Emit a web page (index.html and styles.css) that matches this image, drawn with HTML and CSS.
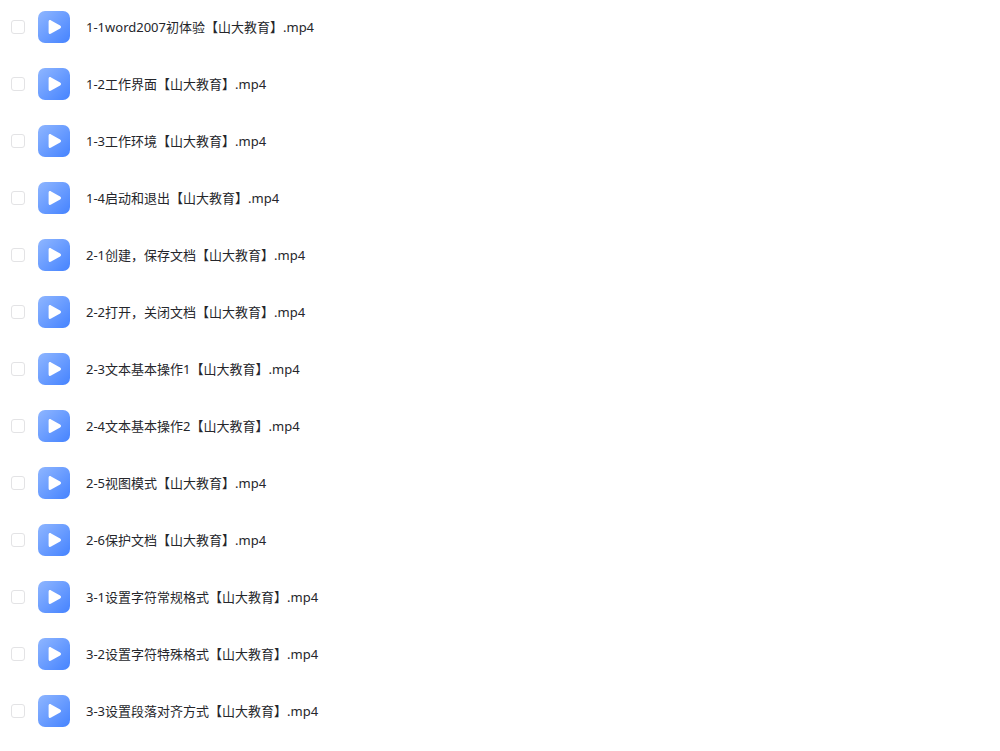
FILE: index.html
```html
<!DOCTYPE html>
<html lang="zh-CN">
<head>
    <meta charset="UTF-8">
    <meta name="viewport" content="width=device-width, initial-scale=1.0">
    <title>文件列表</title>
    <link rel="stylesheet" href="styles.css">
</head>
<body>

<!-- shared video file icon -->
<svg class="icon-defs" width="0" height="0" aria-hidden="true">
    <defs>
        <linearGradient id="videoBg" x1="0" y1="0" x2="1" y2="1">
            <stop offset="0" stop-color="#8fb6ff"/>
            <stop offset="1" stop-color="#4583ff"/>
        </linearGradient>
    </defs>
    <symbol id="video" viewBox="0 0 32 32">
        <rect width="32" height="32" rx="7" fill="url(#videoBg)"/>
        <path d="M10.6 10.8c0-1.6 1.2-2.2 2.5-1.4l9 5.2c1.3.8 1.3 2 0 2.8l-9 5.2c-1.3.8-2.5.2-2.5-1.4z" fill="#fff"/>
    </symbol>
</svg>

<ul class="file-list">
    <li class="file-row">
        <input type="checkbox" id="file1">
        <svg class="file-icon" aria-hidden="true"><use href="#video"/></svg>
        <label for="file1">1-1word2007初体验【山大教育】.mp4</label>
    </li>
    <li class="file-row">
        <input type="checkbox" id="file2">
        <svg class="file-icon" aria-hidden="true"><use href="#video"/></svg>
        <label for="file2">1-2工作界面【山大教育】.mp4</label>
    </li>
    <li class="file-row">
        <input type="checkbox" id="file3">
        <svg class="file-icon" aria-hidden="true"><use href="#video"/></svg>
        <label for="file3">1-3工作环境【山大教育】.mp4</label>
    </li>
    <li class="file-row">
        <input type="checkbox" id="file4">
        <svg class="file-icon" aria-hidden="true"><use href="#video"/></svg>
        <label for="file4">1-4启动和退出【山大教育】.mp4</label>
    </li>
    <li class="file-row">
        <input type="checkbox" id="file5">
        <svg class="file-icon" aria-hidden="true"><use href="#video"/></svg>
        <label for="file5">2-1创建，保存文档【山大教育】.mp4</label>
    </li>
    <li class="file-row">
        <input type="checkbox" id="file6">
        <svg class="file-icon" aria-hidden="true"><use href="#video"/></svg>
        <label for="file6">2-2打开，关闭文档【山大教育】.mp4</label>
    </li>
    <li class="file-row">
        <input type="checkbox" id="file7">
        <svg class="file-icon" aria-hidden="true"><use href="#video"/></svg>
        <label for="file7">2-3文本基本操作1【山大教育】.mp4</label>
    </li>
    <li class="file-row">
        <input type="checkbox" id="file8">
        <svg class="file-icon" aria-hidden="true"><use href="#video"/></svg>
        <label for="file8">2-4文本基本操作2【山大教育】.mp4</label>
    </li>
    <li class="file-row">
        <input type="checkbox" id="file9">
        <svg class="file-icon" aria-hidden="true"><use href="#video"/></svg>
        <label for="file9">2-5视图模式【山大教育】.mp4</label>
    </li>
    <li class="file-row">
        <input type="checkbox" id="file10">
        <svg class="file-icon" aria-hidden="true"><use href="#video"/></svg>
        <label for="file10">2-6保护文档【山大教育】.mp4</label>
    </li>
    <li class="file-row">
        <input type="checkbox" id="file11">
        <svg class="file-icon" aria-hidden="true"><use href="#video"/></svg>
        <label for="file11">3-1设置字符常规格式【山大教育】.mp4</label>
    </li>
    <li class="file-row">
        <input type="checkbox" id="file12">
        <svg class="file-icon" aria-hidden="true"><use href="#video"/></svg>
        <label for="file12">3-2设置字符特殊格式【山大教育】.mp4</label>
    </li>
    <li class="file-row">
        <input type="checkbox" id="file13">
        <svg class="file-icon" aria-hidden="true"><use href="#video"/></svg>
        <label for="file13">3-3设置段落对齐方式【山大教育】.mp4</label>
    </li>
</ul>

</body>
</html>
```

FILE: styles.css
```css
body {
    margin: 0;
    background-color: #fff;
    color: #25262b;
    font-family: "Noto Sans", "Noto Sans CJK SC", sans-serif;
    font-size: 13px;
    line-height: 20px;
}
.icon-defs {
    display: block;
}
.file-list {
    list-style: none;
    margin: 0;
    padding: 11px;
    display: flex;
    flex-direction: column;
    gap: 25px;
}
.file-row {
    display: flex;
    align-items: center;
}
.file-row input {
    appearance: none;
    flex: none;
    width: 14px;
    height: 14px;
    margin: 0 13px 0 0;
    border: 1px solid #e3e3e5;
    border-radius: 3px;
    background-color: #fff;
    cursor: pointer;
}
.file-row input:checked {
    background-color: #4583ff;
    border-color: #4583ff;
}
.file-icon {
    flex: none;
    width: 32px;
    height: 32px;
    margin-right: 16px;
}
.file-row label {
    cursor: pointer;
}
```
